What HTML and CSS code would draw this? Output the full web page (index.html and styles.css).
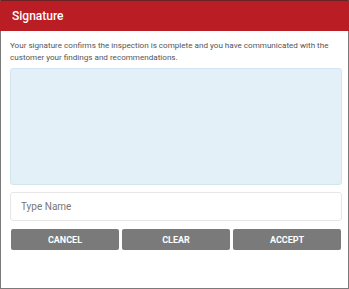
FILE: index.html
```html
<!DOCTYPE html>
<html lang="en">
<head>
    <meta charset="UTF-8">
    <title>Signature</title>
    <link rel="stylesheet" href="styles.css">
</head>
<body>
    <div class="dialog">
        <div class="header">Signature</div>
        <div class="content">
            <p class="info">Your signature confirms the inspection is complete and you have communicated with the customer your findings and recommendations.</p>
            <div class="pad"></div>
            <input class="name" type="text" placeholder="Type Name">
            <div class="actions">
                <button class="btn">Cancel</button>
                <button class="btn">Clear</button>
                <button class="btn">Accept</button>
            </div>
        </div>
    </div>
</body>
</html>
```
FILE: styles.css
```css
body {
    margin: 0;
    font-family: Roboto, "Liberation Sans", sans-serif;
    background-color: #fff;
}

.dialog {
    width: 349px;
    height: 289px;
    box-sizing: border-box;
    border: 1px solid #7a7a7a;
    border-top: 1px solid #6b2224;
    display: flex;
    flex-direction: column;
}

.header {
    height: 30px;
    background-color: #bb1d24;
    color: #fff;
    font-size: 12px;
    font-weight: 500;
    line-height: 30px;
    padding-left: 12px;
    margin: 0 -1px;
}

.content {
    padding: 8px 6px 0 9px;
    display: flex;
    flex-direction: column;
}

.info {
    margin: 0;
    font-size: 8.1px;
    line-height: 12px;
    color: #555;
}

.pad {
    margin-top: 5px;
    height: 115px;
    background-color: #e3f0f7;
    border: 1px solid #d3e6f0;
    border-radius: 3px;
}

.name {
    margin-top: 7px;
    height: 29px;
    box-sizing: border-box;
    border: 1px solid #e6e6e6;
    border-radius: 3px;
    padding: 0 10px;
    font-family: Roboto, "Liberation Sans", sans-serif;
    font-size: 10px;
    color: #333;
    outline: none;
}

.name::placeholder {
    color: #777;
}

.actions {
    margin-top: 8px;
    display: flex;
    gap: 3px;
    padding: 0 1px 0 1px;
}

.btn {
    flex: 1;
    height: 21px;
    border: none;
    border-radius: 2px;
    background-color: #7a7a7a;
    color: #fff;
    font-family: Roboto, "Liberation Sans", sans-serif;
    font-size: 9px;
    font-weight: 700;
    text-transform: uppercase;
    cursor: pointer;
}
```
